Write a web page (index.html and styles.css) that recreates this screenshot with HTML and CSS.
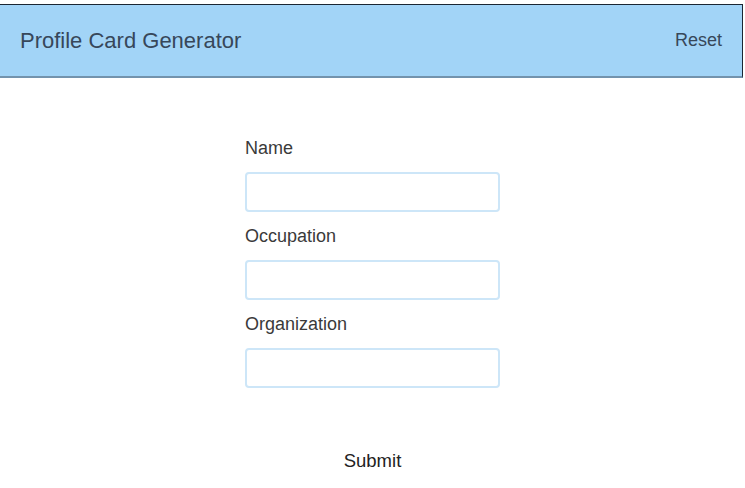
FILE: index.html
```html
<!DOCTYPE html>
<html lang="en">
<head>
    <meta charset="UTF-8">
    <meta name="viewport" content="width=device-width, initial-scale=1.0">
    <title>Profile Card Generator</title>
    <link rel="stylesheet" href="styles.css">
</head>
<body>
    <!-- Top bar -->
    <header class="top-bar">
        <h1 class="top-title">Profile Card Generator</h1>
        <button class="reset-btn">Reset</button>
    </header>

    <!-- Form -->
    <form class="profile-form">
        <label for="name">Name</label>
        <input type="text" id="name">

        <label for="occupation">Occupation</label>
        <input type="text" id="occupation">

        <label for="organization">Organization</label>
        <input type="text" id="organization">

        <button type="button" class="submit-btn">Submit</button>
    </form>
</body>
</html>
```

FILE: styles.css
```css
/* Base */
body {
    margin: 0;
    font-family: "Liberation Sans", Arial, sans-serif;
    background-color: #fff;
    color: #333;
}

/* Top bar */
.top-bar {
    margin-top: 4px;
    width: 742px;
    height: 71px;
    box-sizing: content-box;
    display: flex;
    align-items: center;
    justify-content: space-between;
    background-color: #a2d4f7;
    border-top: 1px solid #1b2633;
    border-right: 1px solid #1b2633;
    border-bottom: 2px solid #7393ad;
}

.top-title {
    margin: 0 0 0 20px;
    font-size: 22px;
    font-weight: normal;
    color: #37475a;
}

.reset-btn {
    margin-right: 20px;
    padding: 0;
    background: none;
    border: none;
    font-family: inherit;
    font-size: 18px;
    color: #37475a;
    cursor: pointer;
}

/* Form */
.profile-form {
    width: 255px;
    margin: 60px auto 0;
    display: flex;
    flex-direction: column;
}

.profile-form label {
    font-size: 18px;
    line-height: 20px;
    color: #3a3a3a;
    margin-bottom: 14px;
}

.profile-form input {
    height: 40px;
    box-sizing: border-box;
    border: 2px solid #cde6f8;
    border-radius: 4px;
    margin-bottom: 14px;
    padding: 0 8px;
    font-size: 16px;
}

.submit-btn {
    margin-top: 48px;
    align-self: center;
    padding: 0;
    background: none;
    border: none;
    font-family: inherit;
    font-size: 18.5px;
    color: #222;
    cursor: pointer;
}
```
